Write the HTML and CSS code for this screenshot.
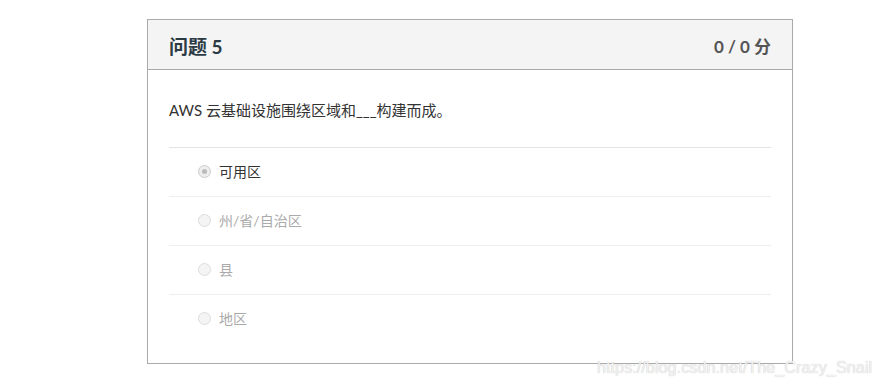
FILE: index.html
```html
<!DOCTYPE html>
<html lang="zh-CN">
<head>
    <meta charset="UTF-8">
    <title>问题 5</title>
    <link rel="stylesheet" href="styles.css">
</head>
<body>
    <div class="card">
        <div class="card-head">
            <span class="titulo">问题 5</span>
            <span class="nota">0 / 0 分</span>
        </div>
        <div class="card-body">
            <p class="pergunta">AWS 云基础设施围绕区域和___构建而成。</p>
            <ul class="opcoes">
                <li class="opcao ativa"><span class="radio marcado"></span>可用区</li>
                <li class="opcao"><span class="radio"></span>州/省/自治区</li>
                <li class="opcao"><span class="radio"></span>县</li>
                <li class="opcao"><span class="radio"></span>地区</li>
            </ul>
        </div>
    </div>
    <div class="marca">https://blog.csdn.net/The_Crazy_Snail</div>
</body>
</html>
```
FILE: styles.css
```css
body {
    margin: 0;
    font-family: Lato, "Noto Sans CJK SC", sans-serif;
    background: #fff;
    position: relative;
    height: 384px;
    overflow: hidden;
}
.card {
    margin: 19px 0 0 147px;
    width: 644px;
    height: 343px;
    border: 1px solid #aaa;
    box-sizing: content-box;
}
.card-head {
    height: 49px;
    background: #f4f4f4;
    border-bottom: 1px solid #aaa;
    display: flex;
    align-items: center;
    justify-content: space-between;
    padding: 0 21px;
}
.titulo {
    font-size: 19px;
    font-weight: bold;
    color: #2c3a44;
    margin-top: 2px;
}
.nota {
    font-size: 17px;
    font-weight: bold;
    color: #555;
    margin-top: 1px;
}
.card-body {
    padding: 0 21px;
}
.pergunta {
    margin: 0;
    height: 77px;
    line-height: 80px;
    font-size: 15px;
    color: #333;
    border-bottom: 1px solid #e3e3e3;
}
.opcoes {
    list-style: none;
    margin: 0;
    padding: 0;
}
.opcao {
    height: 46px;
    padding-bottom: 2px;
    display: flex;
    align-items: center;
    padding-left: 29px;
    font-size: 14px;
    color: #aaa;
    border-bottom: 1px solid #eee;
}
.opcao:last-child {
    border-bottom: none;
}
.opcao.ativa {
    color: #333;
}
.radio {
    width: 11px;
    height: 11px;
    border: 1px solid #ddd;
    border-radius: 50%;
    background: #f4f4f4;
    margin-right: 8px;
    display: flex;
    align-items: center;
    justify-content: center;
}
.radio.marcado {
    border-color: #ccc;
    background: #eee;
}
.radio.marcado::after {
    content: "";
    width: 5px;
    height: 5px;
    border-radius: 50%;
    background: #bbb;
}
.marca {
    position: absolute;
    left: 597px;
    top: 358px;
    font-family: "Liberation Sans", Arial, sans-serif;
    font-size: 16.3px;
    color: #f2f2f2;
    text-shadow: 0 0 1px #bbb;
}
```
